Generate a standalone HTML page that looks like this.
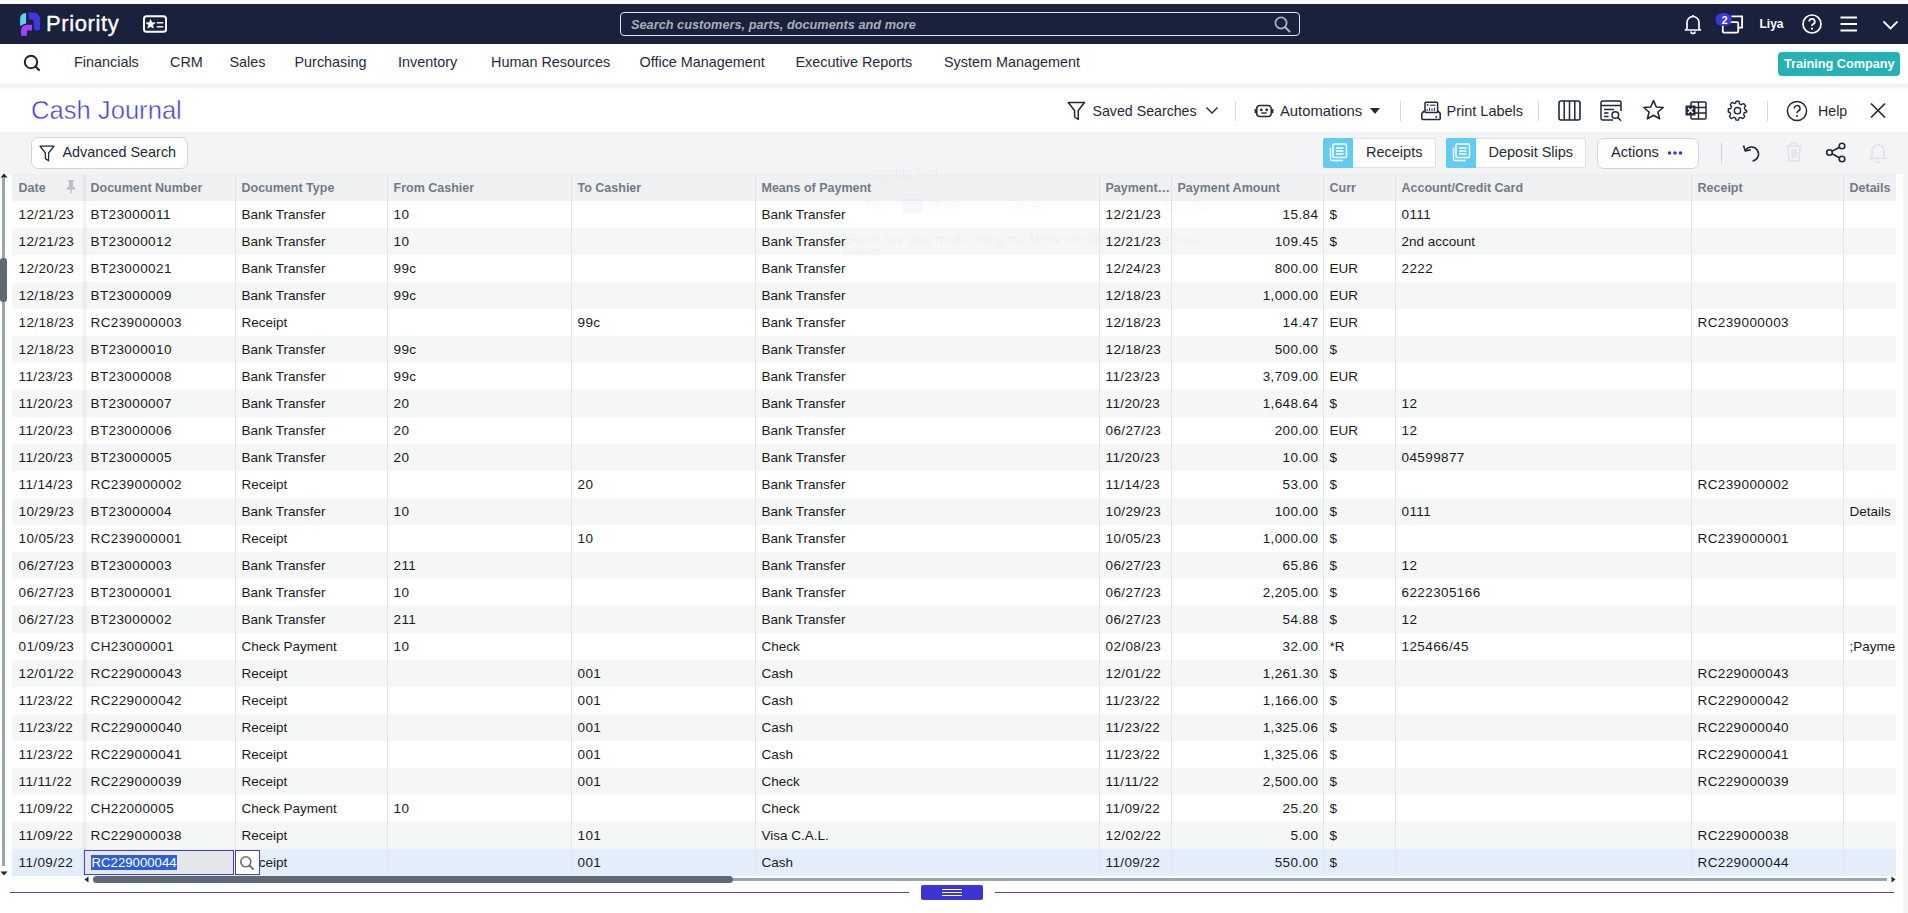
<!DOCTYPE html>
<html><head><meta charset="utf-8"><title>Cash Journal</title>
<style>
html,body{margin:0;padding:0}
body{width:1908px;height:913px;overflow:hidden;position:relative;background:#ffffff;font-family:"Liberation Sans", sans-serif}
.t{position:absolute;white-space:nowrap}
svg{overflow:visible}
</style></head><body>
<div style="position:absolute;left:0;top:0;width:1908px;height:4px;background:#fafafb"></div>
<div style="position:absolute;left:0;top:4px;width:1908px;height:40px;background:#19213d"></div>
<svg style="position:absolute;left:18px;top:11px" width="26" height="27" viewBox="0 0 26 27">
<path d="M8.1,2 V12.3 L2.1,15 V7.6 Q2.3,2.4 8.1,2 Z" fill="#5ccff4"/>
<path d="M10.7,1.6 H15.5 A6.6,6.6 0 0 1 22.1,8.2 V18.3 Q22.1,19.6 19.5,19.6 Q15.6,19.6 15.6,16 V10.6 Q15.6,8.6 13.6,8.6 H10.7 Z" fill="#3e36e2"/>
<path d="M14,13.8 V19.4 H9 V24.7 H3 V19.3 A5.5,5.5 0 0 1 8.5,13.8 Z" fill="#a33ff4"/>
</svg>
<div class="t" style="left:46px;top:9.83px;font-size:22px;line-height:27.5px;color:#ffffff;font-weight:normal;font-style:normal;letter-spacing:0.6px;-webkit-text-stroke:0.35px #ffffff">Priority</div>
<svg style="position:absolute;left:143px;top:15px" width="24" height="18" viewBox="0 0 24 18">
<rect x="1" y="1.2" width="22" height="15.6" rx="2.5" fill="none" stroke="#fff" stroke-width="2"/>
<path d="M7.60,4.50 L8.83,7.60 L12.17,7.82 L9.60,9.95 L10.42,13.18 L7.60,11.40 L4.78,13.18 L5.60,9.95 L3.03,7.82 L6.37,7.60 Z" fill="#fff" stroke="#fff" stroke-width="0.6" stroke-linejoin="round"/>
<rect x="13.7" y="7.1" width="6.6" height="1.4" fill="#fff"/>
<rect x="13.7" y="11.1" width="6.6" height="1.4" fill="#fff"/>
</svg>
<div style="position:absolute;left:620px;top:12px;width:678px;height:22px;border:1px solid #dfe3ea;border-radius:4px"></div>
<div class="t" style="left:631px;top:17.01px;font-size:12.75px;line-height:15.94px;color:#a9aeb8;font-weight:bold;font-style:italic;">Search customers, parts, documents and more</div>
<svg style="position:absolute;left:1274px;top:16px" width="17" height="17" viewBox="0 0 17 17">
<circle cx="7" cy="7" r="5.6" fill="none" stroke="#aeb4bf" stroke-width="1.8"/>
<path d="M11.2,11.2 L15.5,15.5" stroke="#aeb4bf" stroke-width="2" stroke-linecap="round"/></svg>
<svg style="position:absolute;left:1683px;top:14px" width="20" height="20" viewBox="0 0 20 20">
<path d="M4,14.5 V8.5 A6,6 0 0 1 16,8.5 V14.5 L17.5,16 H2.5 Z" fill="none" stroke="#fff" stroke-width="1.7" stroke-linejoin="round"/>
<path d="M8,17.5 A2,2 0 0 0 12,17.5" fill="none" stroke="#fff" stroke-width="1.7"/>
<path d="M10,2.5 V1" stroke="#fff" stroke-width="1.7"/></svg>
<svg style="position:absolute;left:1714px;top:11px" width="32" height="24" viewBox="0 0 32 24">
<rect x="8.8" y="11.2" width="15.4" height="10.4" rx="1.2" fill="none" stroke="#fff" stroke-width="1.8"/>
<path d="M17.5,5.3 H28.1 V16.6 H25" fill="none" stroke="#fff" stroke-width="1.8"/>
<ellipse cx="9.6" cy="8.5" rx="8.2" ry="6.6" fill="#3f38d9"/>
<text x="10.6" y="12.6" font-family="Liberation Sans" font-size="10.5" font-weight="bold" fill="#fff" text-anchor="middle">2</text>
</svg>
<div class="t" style="left:1759.5px;top:16.84px;font-size:12px;line-height:15.0px;color:#ffffff;font-weight:bold;font-style:normal;">Liya</div>
<svg style="position:absolute;left:1801px;top:14px" width="22" height="20" viewBox="0 0 22 20">
<circle cx="11" cy="10" r="9" fill="none" stroke="#fff" stroke-width="1.7"/>
<path d="M8.2,7.6 A2.8,2.8 0 1 1 11.8,10.3 C11.1,10.6 11,11 11,12" fill="none" stroke="#fff" stroke-width="1.7"/>
<circle cx="11" cy="14.7" r="1.1" fill="#fff"/></svg>
<svg style="position:absolute;left:1840px;top:16px" width="18" height="16" viewBox="0 0 18 16">
<path d="M0.5,1.5 H17 M0.5,8 H17 M0.5,14.5 H17" stroke="#fff" stroke-width="1.9"/></svg>
<svg style="position:absolute;left:1882px;top:19px" width="17" height="12" viewBox="0 0 17 12">
<path d="M1.5,2.5 L8.5,9.5 L15.5,2.5" fill="none" stroke="#fff" stroke-width="1.8"/></svg>
<div style="position:absolute;left:0;top:84px;width:1908px;height:5px;background:linear-gradient(#eceef1,#fbfbfc)"></div>
<svg style="position:absolute;left:23px;top:54px" width="19" height="19" viewBox="0 0 19 19">
<circle cx="8" cy="8" r="6.2" fill="none" stroke="#1b2436" stroke-width="2"/>
<path d="M12.5,12.5 L16,16" stroke="#1b2436" stroke-width="2.2" stroke-linecap="round"/></svg>
<div class="t" style="left:74px;top:53.21px;font-size:14.4px;line-height:18.0px;color:#1f2b3d;font-weight:normal;font-style:normal;">Financials</div>
<div class="t" style="left:170px;top:53.21px;font-size:14.4px;line-height:18.0px;color:#1f2b3d;font-weight:normal;font-style:normal;">CRM</div>
<div class="t" style="left:229.5px;top:53.21px;font-size:14.4px;line-height:18.0px;color:#1f2b3d;font-weight:normal;font-style:normal;">Sales</div>
<div class="t" style="left:294.5px;top:53.21px;font-size:14.4px;line-height:18.0px;color:#1f2b3d;font-weight:normal;font-style:normal;">Purchasing</div>
<div class="t" style="left:398px;top:53.21px;font-size:14.4px;line-height:18.0px;color:#1f2b3d;font-weight:normal;font-style:normal;">Inventory</div>
<div class="t" style="left:491px;top:53.21px;font-size:14.4px;line-height:18.0px;color:#1f2b3d;font-weight:normal;font-style:normal;">Human Resources</div>
<div class="t" style="left:639.5px;top:53.21px;font-size:14.4px;line-height:18.0px;color:#1f2b3d;font-weight:normal;font-style:normal;">Office Management</div>
<div class="t" style="left:795.5px;top:53.21px;font-size:14.4px;line-height:18.0px;color:#1f2b3d;font-weight:normal;font-style:normal;">Executive Reports</div>
<div class="t" style="left:944px;top:53.21px;font-size:14.4px;line-height:18.0px;color:#1f2b3d;font-weight:normal;font-style:normal;">System Management</div>
<div style="position:absolute;left:1778px;top:52px;width:122px;height:23.5px;border-radius:4px;background:#26b1b4"></div>
<div class="t" style="left:1784px;top:56.86px;font-size:12.7px;line-height:15.88px;color:#ffffff;font-weight:bold;font-style:normal;">Training Company</div>
<div class="t" style="left:31px;top:93.73px;font-size:25.6px;line-height:32.0px;color:#4b40c9;font-weight:normal;font-style:normal;-webkit-text-stroke:0.45px #ffffff">Cash Journal</div>
<svg style="position:absolute;left:1067px;top:101px" width="19" height="20" viewBox="0 0 19 20">
<path d="M1.2,1.5 H17.6 L11.2,9.5 V18.5 L7.6,16 V9.5 Z" fill="none" stroke="#1f2937" stroke-width="1.5" stroke-linejoin="round"/></svg>
<div class="t" style="left:1092.5px;top:102.5px;font-size:14.2px;line-height:17.75px;color:#1f2937;font-weight:normal;font-style:normal;">Saved Searches</div>
<svg style="position:absolute;left:1205px;top:105px" width="14" height="11" viewBox="0 0 14 11">
<path d="M1.5,2.5 L7,8 L12.5,2.5" fill="none" stroke="#1f2937" stroke-width="1.4"/></svg>
<div style="position:absolute;left:1235px;top:101px;width:1px;height:20px;background:#d6d9de"></div>
<svg style="position:absolute;left:1254px;top:103px" width="20" height="16" viewBox="0 0 20 16">
<rect x="2.8" y="2.6" width="14.4" height="11" rx="3" fill="none" stroke="#1f2937" stroke-width="1.5"/>
<rect x="0.6" y="6" width="2.2" height="4.2" fill="#1f2937"/><rect x="17.2" y="6" width="2.2" height="4.2" fill="#1f2937"/>
<circle cx="7.3" cy="6.9" r="1.3" fill="#1f2937"/><circle cx="12.7" cy="6.9" r="1.3" fill="#1f2937"/>
<path d="M7.3,10 H12.7" stroke="#1f2937" stroke-width="1.4"/></svg>
<div class="t" style="left:1280px;top:101.92px;font-size:14.8px;line-height:18.5px;color:#1f2937;font-weight:normal;font-style:normal;">Automations</div>
<svg style="position:absolute;left:1369px;top:107px" width="12" height="8" viewBox="0 0 12 8">
<path d="M1,1 H11 L6,7 Z" fill="#1f2937"/></svg>
<div style="position:absolute;left:1400px;top:101px;width:1px;height:20px;background:#d6d9de"></div>
<svg style="position:absolute;left:1420px;top:100px" width="22" height="21" viewBox="0 0 22 21">
<rect x="5" y="2.2" width="12.6" height="10.4" rx="0.8" fill="none" stroke="#1f2937" stroke-width="1.5"/>
<circle cx="7.6" cy="4.9" r="0.9" fill="#1f2937"/>
<path d="M10,5.2 H15.5" stroke="#1f2937" stroke-width="1.1"/>
<path d="M7.2,11 V9 M9.6,11 V7.8 M12,11 V8.6 M14.4,11 V7.6" stroke="#3a4456" stroke-width="1.1"/>
<path d="M4.6,10.6 L1.8,13.4 V18.4 A1,1 0 0 0 2.8,19.4 H19.2 A1,1 0 0 0 20.2,18.4 V13.4 L17.4,10.6" fill="none" stroke="#1f2937" stroke-width="1.5" stroke-linejoin="round"/>
<circle cx="16.2" cy="17" r="0.9" fill="#1f2937"/></svg>
<div class="t" style="left:1446.5px;top:102.22px;font-size:14.5px;line-height:18.12px;color:#1f2937;font-weight:normal;font-style:normal;">Print Labels</div>
<div style="position:absolute;left:1538px;top:101px;width:1px;height:20px;background:#d6d9de"></div>
<svg style="position:absolute;left:1558px;top:100px" width="23" height="21" viewBox="0 0 23 21">
<rect x="1" y="1" width="21" height="19" rx="2" fill="none" stroke="#1f2937" stroke-width="1.6"/>
<path d="M6.2,1 V20 M11.5,1 V20 M16.8,1 V20" stroke="#1f2937" stroke-width="1.5"/></svg>
<svg style="position:absolute;left:1600px;top:100px" width="23" height="22" viewBox="0 0 23 22">
<path d="M13,20 H2.5 A1.5,1.5 0 0 1 1,18.5 V2.5 A1.5,1.5 0 0 1 2.5,1 H19.5 A1.5,1.5 0 0 1 21,2.5 V11" fill="none" stroke="#1f2937" stroke-width="1.5"/>
<path d="M1,5.5 H21 M4,9.5 H14 M4,13 H8.5 M4,16.5 H8.5" stroke="#1f2937" stroke-width="1.4"/>
<circle cx="15.3" cy="15" r="3.3" fill="none" stroke="#1f2937" stroke-width="1.5"/>
<path d="M17.7,17.4 L21,20.7" stroke="#1f2937" stroke-width="1.6"/></svg>
<svg style="position:absolute;left:1642px;top:99px" width="23" height="22" viewBox="0 0 23 22">
<path d="M11.5,1.6 L14.3,8 L21.2,8.5 L15.9,13 L17.6,19.8 L11.5,16.2 L5.4,19.8 L7.1,13 L1.8,8.5 L8.7,8 Z" fill="none" stroke="#1f2937" stroke-width="1.6" stroke-linejoin="round"/></svg>
<svg style="position:absolute;left:1685px;top:101px" width="22" height="19" viewBox="0 0 22 19">
<rect x="6" y="1" width="15" height="17" rx="1" fill="none" stroke="#1f2937" stroke-width="1.5"/>
<path d="M6,6.5 H21 M6,12 H21 M13.5,1 V18" stroke="#1f2937" stroke-width="1.4"/>
<rect x="0.5" y="4.5" width="10" height="10" fill="#1f2937"/>
<path d="M3,7 L8,12 M8,7 L3,12" stroke="#fff" stroke-width="1.5"/></svg>
<svg style="position:absolute;left:1727px;top:100px" width="21" height="21" viewBox="0 0 24 24">
<path d="M10.3,1.5 H13.7 L14.3,4.4 L16.4,5.4 L19,4 L21.3,6.5 L19.8,9 L20.6,11.2 L22.5,12 V13.7 L19.8,14.4 L19,16.5 L20.3,19 L18,21.3 L15.5,19.9 L13.5,20.7 L13,23 H10.3 L9.7,20.6 L7.6,19.7 L5,21.2 L2.7,18.9 L4.2,16.4 L3.4,14.3 L1.5,13.7 V10.3 L4.3,9.7 L5.1,7.6 L3.7,5 L6,2.7 L8.5,4.1 L9.8,3.4 Z" fill="none" stroke="#1f2937" stroke-width="1.6" stroke-linejoin="round"/>
<circle cx="12" cy="12.2" r="3.6" fill="none" stroke="#1f2937" stroke-width="1.6"/></svg>
<div style="position:absolute;left:1767px;top:101px;width:1px;height:20px;background:#d6d9de"></div>
<svg style="position:absolute;left:1786px;top:100px" width="22" height="22" viewBox="0 0 22 22">
<circle cx="11" cy="11" r="9.6" fill="none" stroke="#1f2937" stroke-width="1.5"/>
<path d="M8.2,8.5 A2.9,2.9 0 1 1 11.9,11.3 C11.2,11.6 11,12 11,13.2" fill="none" stroke="#1f2937" stroke-width="1.5"/>
<circle cx="11" cy="15.9" r="1" fill="#1f2937"/></svg>
<div class="t" style="left:1818px;top:102.5px;font-size:14.2px;line-height:17.75px;color:#1f2937;font-weight:normal;font-style:normal;">Help</div>
<svg style="position:absolute;left:1869px;top:102px" width="18" height="17" viewBox="0 0 18 17">
<path d="M2,1.5 L16,15.5 M16,1.5 L2,15.5" stroke="#1f2937" stroke-width="1.7"/></svg>
<div style="position:absolute;left:0;top:132px;width:1908px;height:42px;background:#f2f4f6"></div>
<div style="position:absolute;left:30.5px;top:137px;width:155px;height:30px;border:1px solid #cfd5dd;border-radius:7px;background:#fff"></div>
<svg style="position:absolute;left:39px;top:145px" width="16" height="17" viewBox="0 0 16 17">
<path d="M1,1.2 H15 L9.6,8 V15.8 L6.4,13.6 V8 Z" fill="none" stroke="#1f2937" stroke-width="1.3" stroke-linejoin="round"/></svg>
<div class="t" style="left:62.5px;top:143.21px;font-size:14.4px;line-height:18.0px;color:#1f2937;font-weight:normal;font-style:normal;">Advanced Search</div>
<div style="position:absolute;left:1323px;top:138px;width:113px;height:30px;background:#fff;border:1px solid #dde2e8;box-sizing:border-box;border-radius:2px"></div><div style="position:absolute;left:1323px;top:138px;width:30px;height:30px;background:#62cbf1;border-radius:2px 0 0 2px"></div><svg style="position:absolute;left:1329px;top:143px" width="19" height="19" viewBox="0 0 19 19">
<rect x="4" y="1" width="13.5" height="13.5" rx="1.2" fill="none" stroke="#fff" stroke-width="1.5"/>
<path d="M1.5,4.5 V16 A1.5,1.5 0 0 0 3,17.5 H14" fill="none" stroke="#fff" stroke-width="1.5"/>
<path d="M7,5 H14.5 M7,8 H14.5 M7,11 H14.5" stroke="#fff" stroke-width="1.3"/></svg><div class="t" style="left:1366px;top:143.12px;font-size:14.5px;line-height:18.12px;color:#1f2937;font-weight:normal;font-style:normal;">Receipts</div>
<div style="position:absolute;left:1446px;top:138px;width:140px;height:30px;background:#fff;border:1px solid #dde2e8;box-sizing:border-box;border-radius:2px"></div><div style="position:absolute;left:1446px;top:138px;width:30px;height:30px;background:#62cbf1;border-radius:2px 0 0 2px"></div><svg style="position:absolute;left:1452px;top:143px" width="19" height="19" viewBox="0 0 19 19">
<rect x="4" y="1" width="13.5" height="13.5" rx="1.2" fill="none" stroke="#fff" stroke-width="1.5"/>
<path d="M1.5,4.5 V16 A1.5,1.5 0 0 0 3,17.5 H14" fill="none" stroke="#fff" stroke-width="1.5"/>
<path d="M7,5 H14.5 M7,8 H14.5 M7,11 H14.5" stroke="#fff" stroke-width="1.3"/></svg><div class="t" style="left:1488.5px;top:143.12px;font-size:14.5px;line-height:18.12px;color:#1f2937;font-weight:normal;font-style:normal;">Deposit Slips</div>
<div style="position:absolute;left:1596.5px;top:137.5px;width:100px;height:29.5px;border:1px solid #cfd5dd;border-radius:7px;background:#fff"></div>
<div class="t" style="left:1611px;top:143.02px;font-size:14.6px;line-height:18.25px;color:#1f2937;font-weight:normal;font-style:normal;">Actions</div>
<svg style="position:absolute;left:1667px;top:150px" width="16" height="6" viewBox="0 0 16 6">
<circle cx="2.5" cy="3" r="1.8" fill="#3d35c8"/><circle cx="8" cy="3" r="1.8" fill="#3d35c8"/><circle cx="13.5" cy="3" r="1.8" fill="#3d35c8"/></svg>
<div style="position:absolute;left:1721px;top:142.5px;width:1px;height:21px;background:#cfd5dc"></div>
<svg style="position:absolute;left:1742px;top:143px" width="19" height="20" viewBox="0 0 19 20">
<path d="M3.5,7.5 A7,7 0 1 1 10.5,18" fill="none" stroke="#1f2937" stroke-width="1.6"/>
<path d="M1.5,2.5 L3.3,8 L8.8,6.7" fill="none" stroke="#1f2937" stroke-width="1.6" stroke-linejoin="round"/></svg>
<svg style="position:absolute;left:1785px;top:142px" width="18" height="20" viewBox="0 0 18 20">
<path d="M1,4 H17 M6,4 V1.5 H12 V4 M3,4 L4,19 H14 L15,4 M7,7 V16 M9,7 V16 M11,7 V16" fill="none" stroke="#dfe2e6" stroke-width="1.5"/></svg>
<svg style="position:absolute;left:1825px;top:142px" width="22" height="21" viewBox="0 0 22 21">
<circle cx="17" cy="4" r="2.8" fill="none" stroke="#1f2937" stroke-width="1.6"/>
<circle cx="4.5" cy="10.5" r="2.8" fill="none" stroke="#1f2937" stroke-width="1.6"/>
<circle cx="17" cy="17" r="2.8" fill="none" stroke="#1f2937" stroke-width="1.6"/>
<path d="M7,9.2 L14.5,5.3 M7,11.8 L14.5,15.7" stroke="#1f2937" stroke-width="1.6"/></svg>
<svg style="position:absolute;left:1868px;top:142px" width="20" height="21" viewBox="0 0 20 21">
<path d="M4,15 V9 A6,6 0 0 1 16,9 V15 L17.5,16.5 H2.5 Z" fill="none" stroke="#e0e3e7" stroke-width="1.6"/>
<path d="M8,18.5 A2,2 0 0 0 12,18.5" fill="none" stroke="#e0e3e7" stroke-width="1.6"/></svg>
<div style="position:absolute;left:12px;top:174px;width:1884px;height:27px;background:#eff0f2"></div>
<div class="t" style="left:18.5px;top:181.46px;font-size:12.5px;line-height:15.62px;color:#727b85;font-weight:bold;font-style:normal;">Date</div>
<div class="t" style="left:90.5px;top:181.46px;font-size:12.5px;line-height:15.62px;color:#727b85;font-weight:bold;font-style:normal;">Document Number</div>
<div class="t" style="left:241.5px;top:181.46px;font-size:12.5px;line-height:15.62px;color:#727b85;font-weight:bold;font-style:normal;">Document Type</div>
<div class="t" style="left:393.5px;top:181.46px;font-size:12.5px;line-height:15.62px;color:#727b85;font-weight:bold;font-style:normal;">From Cashier</div>
<div class="t" style="left:577.5px;top:181.46px;font-size:12.5px;line-height:15.62px;color:#727b85;font-weight:bold;font-style:normal;">To Cashier</div>
<div class="t" style="left:761.5px;top:181.46px;font-size:12.5px;line-height:15.62px;color:#727b85;font-weight:bold;font-style:normal;">Means of Payment</div>
<div class="t" style="left:1105.5px;top:181.46px;font-size:12.5px;line-height:15.62px;color:#727b85;font-weight:bold;font-style:normal;">Payment…</div>
<div class="t" style="left:1177.5px;top:181.46px;font-size:12.5px;line-height:15.62px;color:#727b85;font-weight:bold;font-style:normal;">Payment Amount</div>
<div class="t" style="left:1329.5px;top:181.46px;font-size:12.5px;line-height:15.62px;color:#727b85;font-weight:bold;font-style:normal;">Curr</div>
<div class="t" style="left:1401.5px;top:181.46px;font-size:12.5px;line-height:15.62px;color:#727b85;font-weight:bold;font-style:normal;">Account/Credit Card</div>
<div class="t" style="left:1697.5px;top:181.46px;font-size:12.5px;line-height:15.62px;color:#727b85;font-weight:bold;font-style:normal;">Receipt</div>
<div class="t" style="left:1849.5px;top:181.46px;font-size:12.5px;line-height:15.62px;color:#727b85;font-weight:bold;font-style:normal;">Details</div>
<svg style="position:absolute;left:65px;top:178.5px" width="12" height="15" viewBox="0 0 12 15">
<path d="M3,1 H9 V2.5 L8,3 V7 L10.5,9.5 V10.5 H6.7 V14.5 H5.3 V10.5 H1.5 V9.5 L4,7 V3 L3,2.5 Z" fill="#b9bec5"/></svg>
<div style="position:absolute;left:12px;top:201px;width:1884px;height:27px;background:#ffffff"></div>
<div class="t" style="left:18.5px;top:206.88px;font-size:13.5px;line-height:16.88px;color:#1a1a1a;font-weight:normal;font-style:normal;letter-spacing:0.4px">12/21/23</div>
<div class="t" style="left:90.5px;top:206.88px;font-size:13.5px;line-height:16.88px;color:#1a1a1a;font-weight:normal;font-style:normal;letter-spacing:0.4px">BT23000011</div>
<div class="t" style="left:241.5px;top:206.88px;font-size:13.5px;line-height:16.88px;color:#1a1a1a;font-weight:normal;font-style:normal;">Bank Transfer</div>
<div class="t" style="left:393.5px;top:206.88px;font-size:13.5px;line-height:16.88px;color:#1a1a1a;font-weight:normal;font-style:normal;letter-spacing:0.4px">10</div>
<div class="t" style="left:761.5px;top:206.88px;font-size:13.5px;line-height:16.88px;color:#1a1a1a;font-weight:normal;font-style:normal;">Bank Transfer</div>
<div class="t" style="left:1105.5px;top:206.88px;font-size:13.5px;line-height:16.88px;color:#1a1a1a;font-weight:normal;font-style:normal;letter-spacing:0.4px">12/21/23</div>
<div class="t" style="right:589.5999999999999px;top:206.88px;font-size:13.5px;line-height:16.88px;color:#1a1a1a;font-weight:normal;font-style:normal;letter-spacing:0.4px">15.84</div>
<div class="t" style="left:1329.5px;top:206.88px;font-size:13.5px;line-height:16.88px;color:#1a1a1a;font-weight:normal;font-style:normal;">$</div>
<div class="t" style="left:1401.5px;top:206.88px;font-size:13.5px;line-height:16.88px;color:#1a1a1a;font-weight:normal;font-style:normal;letter-spacing:0.4px">0111</div>
<div style="position:absolute;left:12px;top:228px;width:1884px;height:27px;background:#f5f6f6"></div>
<div class="t" style="left:18.5px;top:233.88px;font-size:13.5px;line-height:16.88px;color:#1a1a1a;font-weight:normal;font-style:normal;letter-spacing:0.4px">12/21/23</div>
<div class="t" style="left:90.5px;top:233.88px;font-size:13.5px;line-height:16.88px;color:#1a1a1a;font-weight:normal;font-style:normal;letter-spacing:0.4px">BT23000012</div>
<div class="t" style="left:241.5px;top:233.88px;font-size:13.5px;line-height:16.88px;color:#1a1a1a;font-weight:normal;font-style:normal;">Bank Transfer</div>
<div class="t" style="left:393.5px;top:233.88px;font-size:13.5px;line-height:16.88px;color:#1a1a1a;font-weight:normal;font-style:normal;letter-spacing:0.4px">10</div>
<div class="t" style="left:761.5px;top:233.88px;font-size:13.5px;line-height:16.88px;color:#1a1a1a;font-weight:normal;font-style:normal;">Bank Transfer</div>
<div class="t" style="left:1105.5px;top:233.88px;font-size:13.5px;line-height:16.88px;color:#1a1a1a;font-weight:normal;font-style:normal;letter-spacing:0.4px">12/21/23</div>
<div class="t" style="right:589.5999999999999px;top:233.88px;font-size:13.5px;line-height:16.88px;color:#1a1a1a;font-weight:normal;font-style:normal;letter-spacing:0.4px">109.45</div>
<div class="t" style="left:1329.5px;top:233.88px;font-size:13.5px;line-height:16.88px;color:#1a1a1a;font-weight:normal;font-style:normal;">$</div>
<div class="t" style="left:1401.5px;top:233.88px;font-size:13.5px;line-height:16.88px;color:#1a1a1a;font-weight:normal;font-style:normal;">2nd account</div>
<div style="position:absolute;left:12px;top:255px;width:1884px;height:27px;background:#ffffff"></div>
<div class="t" style="left:18.5px;top:260.88px;font-size:13.5px;line-height:16.88px;color:#1a1a1a;font-weight:normal;font-style:normal;letter-spacing:0.4px">12/20/23</div>
<div class="t" style="left:90.5px;top:260.88px;font-size:13.5px;line-height:16.88px;color:#1a1a1a;font-weight:normal;font-style:normal;letter-spacing:0.4px">BT23000021</div>
<div class="t" style="left:241.5px;top:260.88px;font-size:13.5px;line-height:16.88px;color:#1a1a1a;font-weight:normal;font-style:normal;">Bank Transfer</div>
<div class="t" style="left:393.5px;top:260.88px;font-size:13.5px;line-height:16.88px;color:#1a1a1a;font-weight:normal;font-style:normal;letter-spacing:0.4px">99c</div>
<div class="t" style="left:761.5px;top:260.88px;font-size:13.5px;line-height:16.88px;color:#1a1a1a;font-weight:normal;font-style:normal;">Bank Transfer</div>
<div class="t" style="left:1105.5px;top:260.88px;font-size:13.5px;line-height:16.88px;color:#1a1a1a;font-weight:normal;font-style:normal;letter-spacing:0.4px">12/24/23</div>
<div class="t" style="right:589.5999999999999px;top:260.88px;font-size:13.5px;line-height:16.88px;color:#1a1a1a;font-weight:normal;font-style:normal;letter-spacing:0.4px">800.00</div>
<div class="t" style="left:1329.5px;top:260.88px;font-size:13.5px;line-height:16.88px;color:#1a1a1a;font-weight:normal;font-style:normal;">EUR</div>
<div class="t" style="left:1401.5px;top:260.88px;font-size:13.5px;line-height:16.88px;color:#1a1a1a;font-weight:normal;font-style:normal;letter-spacing:0.4px">2222</div>
<div style="position:absolute;left:12px;top:282px;width:1884px;height:27px;background:#f5f6f6"></div>
<div class="t" style="left:18.5px;top:287.88px;font-size:13.5px;line-height:16.88px;color:#1a1a1a;font-weight:normal;font-style:normal;letter-spacing:0.4px">12/18/23</div>
<div class="t" style="left:90.5px;top:287.88px;font-size:13.5px;line-height:16.88px;color:#1a1a1a;font-weight:normal;font-style:normal;letter-spacing:0.4px">BT23000009</div>
<div class="t" style="left:241.5px;top:287.88px;font-size:13.5px;line-height:16.88px;color:#1a1a1a;font-weight:normal;font-style:normal;">Bank Transfer</div>
<div class="t" style="left:393.5px;top:287.88px;font-size:13.5px;line-height:16.88px;color:#1a1a1a;font-weight:normal;font-style:normal;letter-spacing:0.4px">99c</div>
<div class="t" style="left:761.5px;top:287.88px;font-size:13.5px;line-height:16.88px;color:#1a1a1a;font-weight:normal;font-style:normal;">Bank Transfer</div>
<div class="t" style="left:1105.5px;top:287.88px;font-size:13.5px;line-height:16.88px;color:#1a1a1a;font-weight:normal;font-style:normal;letter-spacing:0.4px">12/18/23</div>
<div class="t" style="right:589.5999999999999px;top:287.88px;font-size:13.5px;line-height:16.88px;color:#1a1a1a;font-weight:normal;font-style:normal;letter-spacing:0.4px">1,000.00</div>
<div class="t" style="left:1329.5px;top:287.88px;font-size:13.5px;line-height:16.88px;color:#1a1a1a;font-weight:normal;font-style:normal;">EUR</div>
<div style="position:absolute;left:12px;top:309px;width:1884px;height:27px;background:#ffffff"></div>
<div class="t" style="left:18.5px;top:314.88px;font-size:13.5px;line-height:16.88px;color:#1a1a1a;font-weight:normal;font-style:normal;letter-spacing:0.4px">12/18/23</div>
<div class="t" style="left:90.5px;top:314.88px;font-size:13.5px;line-height:16.88px;color:#1a1a1a;font-weight:normal;font-style:normal;letter-spacing:0.4px">RC239000003</div>
<div class="t" style="left:241.5px;top:314.88px;font-size:13.5px;line-height:16.88px;color:#1a1a1a;font-weight:normal;font-style:normal;">Receipt</div>
<div class="t" style="left:577.5px;top:314.88px;font-size:13.5px;line-height:16.88px;color:#1a1a1a;font-weight:normal;font-style:normal;letter-spacing:0.4px">99c</div>
<div class="t" style="left:761.5px;top:314.88px;font-size:13.5px;line-height:16.88px;color:#1a1a1a;font-weight:normal;font-style:normal;">Bank Transfer</div>
<div class="t" style="left:1105.5px;top:314.88px;font-size:13.5px;line-height:16.88px;color:#1a1a1a;font-weight:normal;font-style:normal;letter-spacing:0.4px">12/18/23</div>
<div class="t" style="right:589.5999999999999px;top:314.88px;font-size:13.5px;line-height:16.88px;color:#1a1a1a;font-weight:normal;font-style:normal;letter-spacing:0.4px">14.47</div>
<div class="t" style="left:1329.5px;top:314.88px;font-size:13.5px;line-height:16.88px;color:#1a1a1a;font-weight:normal;font-style:normal;">EUR</div>
<div class="t" style="left:1697.5px;top:314.88px;font-size:13.5px;line-height:16.88px;color:#1a1a1a;font-weight:normal;font-style:normal;letter-spacing:0.4px">RC239000003</div>
<div style="position:absolute;left:12px;top:336px;width:1884px;height:27px;background:#f5f6f6"></div>
<div class="t" style="left:18.5px;top:341.88px;font-size:13.5px;line-height:16.88px;color:#1a1a1a;font-weight:normal;font-style:normal;letter-spacing:0.4px">12/18/23</div>
<div class="t" style="left:90.5px;top:341.88px;font-size:13.5px;line-height:16.88px;color:#1a1a1a;font-weight:normal;font-style:normal;letter-spacing:0.4px">BT23000010</div>
<div class="t" style="left:241.5px;top:341.88px;font-size:13.5px;line-height:16.88px;color:#1a1a1a;font-weight:normal;font-style:normal;">Bank Transfer</div>
<div class="t" style="left:393.5px;top:341.88px;font-size:13.5px;line-height:16.88px;color:#1a1a1a;font-weight:normal;font-style:normal;letter-spacing:0.4px">99c</div>
<div class="t" style="left:761.5px;top:341.88px;font-size:13.5px;line-height:16.88px;color:#1a1a1a;font-weight:normal;font-style:normal;">Bank Transfer</div>
<div class="t" style="left:1105.5px;top:341.88px;font-size:13.5px;line-height:16.88px;color:#1a1a1a;font-weight:normal;font-style:normal;letter-spacing:0.4px">12/18/23</div>
<div class="t" style="right:589.5999999999999px;top:341.88px;font-size:13.5px;line-height:16.88px;color:#1a1a1a;font-weight:normal;font-style:normal;letter-spacing:0.4px">500.00</div>
<div class="t" style="left:1329.5px;top:341.88px;font-size:13.5px;line-height:16.88px;color:#1a1a1a;font-weight:normal;font-style:normal;">$</div>
<div style="position:absolute;left:12px;top:363px;width:1884px;height:27px;background:#ffffff"></div>
<div class="t" style="left:18.5px;top:368.88px;font-size:13.5px;line-height:16.88px;color:#1a1a1a;font-weight:normal;font-style:normal;letter-spacing:0.4px">11/23/23</div>
<div class="t" style="left:90.5px;top:368.88px;font-size:13.5px;line-height:16.88px;color:#1a1a1a;font-weight:normal;font-style:normal;letter-spacing:0.4px">BT23000008</div>
<div class="t" style="left:241.5px;top:368.88px;font-size:13.5px;line-height:16.88px;color:#1a1a1a;font-weight:normal;font-style:normal;">Bank Transfer</div>
<div class="t" style="left:393.5px;top:368.88px;font-size:13.5px;line-height:16.88px;color:#1a1a1a;font-weight:normal;font-style:normal;letter-spacing:0.4px">99c</div>
<div class="t" style="left:761.5px;top:368.88px;font-size:13.5px;line-height:16.88px;color:#1a1a1a;font-weight:normal;font-style:normal;">Bank Transfer</div>
<div class="t" style="left:1105.5px;top:368.88px;font-size:13.5px;line-height:16.88px;color:#1a1a1a;font-weight:normal;font-style:normal;letter-spacing:0.4px">11/23/23</div>
<div class="t" style="right:589.5999999999999px;top:368.88px;font-size:13.5px;line-height:16.88px;color:#1a1a1a;font-weight:normal;font-style:normal;letter-spacing:0.4px">3,709.00</div>
<div class="t" style="left:1329.5px;top:368.88px;font-size:13.5px;line-height:16.88px;color:#1a1a1a;font-weight:normal;font-style:normal;">EUR</div>
<div style="position:absolute;left:12px;top:390px;width:1884px;height:27px;background:#f5f6f6"></div>
<div class="t" style="left:18.5px;top:395.88px;font-size:13.5px;line-height:16.88px;color:#1a1a1a;font-weight:normal;font-style:normal;letter-spacing:0.4px">11/20/23</div>
<div class="t" style="left:90.5px;top:395.88px;font-size:13.5px;line-height:16.88px;color:#1a1a1a;font-weight:normal;font-style:normal;letter-spacing:0.4px">BT23000007</div>
<div class="t" style="left:241.5px;top:395.88px;font-size:13.5px;line-height:16.88px;color:#1a1a1a;font-weight:normal;font-style:normal;">Bank Transfer</div>
<div class="t" style="left:393.5px;top:395.88px;font-size:13.5px;line-height:16.88px;color:#1a1a1a;font-weight:normal;font-style:normal;letter-spacing:0.4px">20</div>
<div class="t" style="left:761.5px;top:395.88px;font-size:13.5px;line-height:16.88px;color:#1a1a1a;font-weight:normal;font-style:normal;">Bank Transfer</div>
<div class="t" style="left:1105.5px;top:395.88px;font-size:13.5px;line-height:16.88px;color:#1a1a1a;font-weight:normal;font-style:normal;letter-spacing:0.4px">11/20/23</div>
<div class="t" style="right:589.5999999999999px;top:395.88px;font-size:13.5px;line-height:16.88px;color:#1a1a1a;font-weight:normal;font-style:normal;letter-spacing:0.4px">1,648.64</div>
<div class="t" style="left:1329.5px;top:395.88px;font-size:13.5px;line-height:16.88px;color:#1a1a1a;font-weight:normal;font-style:normal;">$</div>
<div class="t" style="left:1401.5px;top:395.88px;font-size:13.5px;line-height:16.88px;color:#1a1a1a;font-weight:normal;font-style:normal;letter-spacing:0.4px">12</div>
<div style="position:absolute;left:12px;top:417px;width:1884px;height:27px;background:#ffffff"></div>
<div class="t" style="left:18.5px;top:422.88px;font-size:13.5px;line-height:16.88px;color:#1a1a1a;font-weight:normal;font-style:normal;letter-spacing:0.4px">11/20/23</div>
<div class="t" style="left:90.5px;top:422.88px;font-size:13.5px;line-height:16.88px;color:#1a1a1a;font-weight:normal;font-style:normal;letter-spacing:0.4px">BT23000006</div>
<div class="t" style="left:241.5px;top:422.88px;font-size:13.5px;line-height:16.88px;color:#1a1a1a;font-weight:normal;font-style:normal;">Bank Transfer</div>
<div class="t" style="left:393.5px;top:422.88px;font-size:13.5px;line-height:16.88px;color:#1a1a1a;font-weight:normal;font-style:normal;letter-spacing:0.4px">20</div>
<div class="t" style="left:761.5px;top:422.88px;font-size:13.5px;line-height:16.88px;color:#1a1a1a;font-weight:normal;font-style:normal;">Bank Transfer</div>
<div class="t" style="left:1105.5px;top:422.88px;font-size:13.5px;line-height:16.88px;color:#1a1a1a;font-weight:normal;font-style:normal;letter-spacing:0.4px">06/27/23</div>
<div class="t" style="right:589.5999999999999px;top:422.88px;font-size:13.5px;line-height:16.88px;color:#1a1a1a;font-weight:normal;font-style:normal;letter-spacing:0.4px">200.00</div>
<div class="t" style="left:1329.5px;top:422.88px;font-size:13.5px;line-height:16.88px;color:#1a1a1a;font-weight:normal;font-style:normal;">EUR</div>
<div class="t" style="left:1401.5px;top:422.88px;font-size:13.5px;line-height:16.88px;color:#1a1a1a;font-weight:normal;font-style:normal;letter-spacing:0.4px">12</div>
<div style="position:absolute;left:12px;top:444px;width:1884px;height:27px;background:#f5f6f6"></div>
<div class="t" style="left:18.5px;top:449.88px;font-size:13.5px;line-height:16.88px;color:#1a1a1a;font-weight:normal;font-style:normal;letter-spacing:0.4px">11/20/23</div>
<div class="t" style="left:90.5px;top:449.88px;font-size:13.5px;line-height:16.88px;color:#1a1a1a;font-weight:normal;font-style:normal;letter-spacing:0.4px">BT23000005</div>
<div class="t" style="left:241.5px;top:449.88px;font-size:13.5px;line-height:16.88px;color:#1a1a1a;font-weight:normal;font-style:normal;">Bank Transfer</div>
<div class="t" style="left:393.5px;top:449.88px;font-size:13.5px;line-height:16.88px;color:#1a1a1a;font-weight:normal;font-style:normal;letter-spacing:0.4px">20</div>
<div class="t" style="left:761.5px;top:449.88px;font-size:13.5px;line-height:16.88px;color:#1a1a1a;font-weight:normal;font-style:normal;">Bank Transfer</div>
<div class="t" style="left:1105.5px;top:449.88px;font-size:13.5px;line-height:16.88px;color:#1a1a1a;font-weight:normal;font-style:normal;letter-spacing:0.4px">11/20/23</div>
<div class="t" style="right:589.5999999999999px;top:449.88px;font-size:13.5px;line-height:16.88px;color:#1a1a1a;font-weight:normal;font-style:normal;letter-spacing:0.4px">10.00</div>
<div class="t" style="left:1329.5px;top:449.88px;font-size:13.5px;line-height:16.88px;color:#1a1a1a;font-weight:normal;font-style:normal;">$</div>
<div class="t" style="left:1401.5px;top:449.88px;font-size:13.5px;line-height:16.88px;color:#1a1a1a;font-weight:normal;font-style:normal;letter-spacing:0.4px">04599877</div>
<div style="position:absolute;left:12px;top:471px;width:1884px;height:27px;background:#ffffff"></div>
<div class="t" style="left:18.5px;top:476.88px;font-size:13.5px;line-height:16.88px;color:#1a1a1a;font-weight:normal;font-style:normal;letter-spacing:0.4px">11/14/23</div>
<div class="t" style="left:90.5px;top:476.88px;font-size:13.5px;line-height:16.88px;color:#1a1a1a;font-weight:normal;font-style:normal;letter-spacing:0.4px">RC239000002</div>
<div class="t" style="left:241.5px;top:476.88px;font-size:13.5px;line-height:16.88px;color:#1a1a1a;font-weight:normal;font-style:normal;">Receipt</div>
<div class="t" style="left:577.5px;top:476.88px;font-size:13.5px;line-height:16.88px;color:#1a1a1a;font-weight:normal;font-style:normal;letter-spacing:0.4px">20</div>
<div class="t" style="left:761.5px;top:476.88px;font-size:13.5px;line-height:16.88px;color:#1a1a1a;font-weight:normal;font-style:normal;">Bank Transfer</div>
<div class="t" style="left:1105.5px;top:476.88px;font-size:13.5px;line-height:16.88px;color:#1a1a1a;font-weight:normal;font-style:normal;letter-spacing:0.4px">11/14/23</div>
<div class="t" style="right:589.5999999999999px;top:476.88px;font-size:13.5px;line-height:16.88px;color:#1a1a1a;font-weight:normal;font-style:normal;letter-spacing:0.4px">53.00</div>
<div class="t" style="left:1329.5px;top:476.88px;font-size:13.5px;line-height:16.88px;color:#1a1a1a;font-weight:normal;font-style:normal;">$</div>
<div class="t" style="left:1697.5px;top:476.88px;font-size:13.5px;line-height:16.88px;color:#1a1a1a;font-weight:normal;font-style:normal;letter-spacing:0.4px">RC239000002</div>
<div style="position:absolute;left:12px;top:498px;width:1884px;height:27px;background:#f5f6f6"></div>
<div class="t" style="left:18.5px;top:503.88px;font-size:13.5px;line-height:16.88px;color:#1a1a1a;font-weight:normal;font-style:normal;letter-spacing:0.4px">10/29/23</div>
<div class="t" style="left:90.5px;top:503.88px;font-size:13.5px;line-height:16.88px;color:#1a1a1a;font-weight:normal;font-style:normal;letter-spacing:0.4px">BT23000004</div>
<div class="t" style="left:241.5px;top:503.88px;font-size:13.5px;line-height:16.88px;color:#1a1a1a;font-weight:normal;font-style:normal;">Bank Transfer</div>
<div class="t" style="left:393.5px;top:503.88px;font-size:13.5px;line-height:16.88px;color:#1a1a1a;font-weight:normal;font-style:normal;letter-spacing:0.4px">10</div>
<div class="t" style="left:761.5px;top:503.88px;font-size:13.5px;line-height:16.88px;color:#1a1a1a;font-weight:normal;font-style:normal;">Bank Transfer</div>
<div class="t" style="left:1105.5px;top:503.88px;font-size:13.5px;line-height:16.88px;color:#1a1a1a;font-weight:normal;font-style:normal;letter-spacing:0.4px">10/29/23</div>
<div class="t" style="right:589.5999999999999px;top:503.88px;font-size:13.5px;line-height:16.88px;color:#1a1a1a;font-weight:normal;font-style:normal;letter-spacing:0.4px">100.00</div>
<div class="t" style="left:1329.5px;top:503.88px;font-size:13.5px;line-height:16.88px;color:#1a1a1a;font-weight:normal;font-style:normal;">$</div>
<div class="t" style="left:1401.5px;top:503.88px;font-size:13.5px;line-height:16.88px;color:#1a1a1a;font-weight:normal;font-style:normal;letter-spacing:0.4px">0111</div>
<div class="t" style="left:1849.5px;top:503.88px;font-size:13.5px;line-height:16.88px;color:#1a1a1a;font-weight:normal;font-style:normal;">Details</div>
<div style="position:absolute;left:12px;top:525px;width:1884px;height:27px;background:#ffffff"></div>
<div class="t" style="left:18.5px;top:530.88px;font-size:13.5px;line-height:16.88px;color:#1a1a1a;font-weight:normal;font-style:normal;letter-spacing:0.4px">10/05/23</div>
<div class="t" style="left:90.5px;top:530.88px;font-size:13.5px;line-height:16.88px;color:#1a1a1a;font-weight:normal;font-style:normal;letter-spacing:0.4px">RC239000001</div>
<div class="t" style="left:241.5px;top:530.88px;font-size:13.5px;line-height:16.88px;color:#1a1a1a;font-weight:normal;font-style:normal;">Receipt</div>
<div class="t" style="left:577.5px;top:530.88px;font-size:13.5px;line-height:16.88px;color:#1a1a1a;font-weight:normal;font-style:normal;letter-spacing:0.4px">10</div>
<div class="t" style="left:761.5px;top:530.88px;font-size:13.5px;line-height:16.88px;color:#1a1a1a;font-weight:normal;font-style:normal;">Bank Transfer</div>
<div class="t" style="left:1105.5px;top:530.88px;font-size:13.5px;line-height:16.88px;color:#1a1a1a;font-weight:normal;font-style:normal;letter-spacing:0.4px">10/05/23</div>
<div class="t" style="right:589.5999999999999px;top:530.88px;font-size:13.5px;line-height:16.88px;color:#1a1a1a;font-weight:normal;font-style:normal;letter-spacing:0.4px">1,000.00</div>
<div class="t" style="left:1329.5px;top:530.88px;font-size:13.5px;line-height:16.88px;color:#1a1a1a;font-weight:normal;font-style:normal;">$</div>
<div class="t" style="left:1697.5px;top:530.88px;font-size:13.5px;line-height:16.88px;color:#1a1a1a;font-weight:normal;font-style:normal;letter-spacing:0.4px">RC239000001</div>
<div style="position:absolute;left:12px;top:552px;width:1884px;height:27px;background:#f5f6f6"></div>
<div class="t" style="left:18.5px;top:557.88px;font-size:13.5px;line-height:16.88px;color:#1a1a1a;font-weight:normal;font-style:normal;letter-spacing:0.4px">06/27/23</div>
<div class="t" style="left:90.5px;top:557.88px;font-size:13.5px;line-height:16.88px;color:#1a1a1a;font-weight:normal;font-style:normal;letter-spacing:0.4px">BT23000003</div>
<div class="t" style="left:241.5px;top:557.88px;font-size:13.5px;line-height:16.88px;color:#1a1a1a;font-weight:normal;font-style:normal;">Bank Transfer</div>
<div class="t" style="left:393.5px;top:557.88px;font-size:13.5px;line-height:16.88px;color:#1a1a1a;font-weight:normal;font-style:normal;letter-spacing:0.4px">211</div>
<div class="t" style="left:761.5px;top:557.88px;font-size:13.5px;line-height:16.88px;color:#1a1a1a;font-weight:normal;font-style:normal;">Bank Transfer</div>
<div class="t" style="left:1105.5px;top:557.88px;font-size:13.5px;line-height:16.88px;color:#1a1a1a;font-weight:normal;font-style:normal;letter-spacing:0.4px">06/27/23</div>
<div class="t" style="right:589.5999999999999px;top:557.88px;font-size:13.5px;line-height:16.88px;color:#1a1a1a;font-weight:normal;font-style:normal;letter-spacing:0.4px">65.86</div>
<div class="t" style="left:1329.5px;top:557.88px;font-size:13.5px;line-height:16.88px;color:#1a1a1a;font-weight:normal;font-style:normal;">$</div>
<div class="t" style="left:1401.5px;top:557.88px;font-size:13.5px;line-height:16.88px;color:#1a1a1a;font-weight:normal;font-style:normal;letter-spacing:0.4px">12</div>
<div style="position:absolute;left:12px;top:579px;width:1884px;height:27px;background:#ffffff"></div>
<div class="t" style="left:18.5px;top:584.88px;font-size:13.5px;line-height:16.88px;color:#1a1a1a;font-weight:normal;font-style:normal;letter-spacing:0.4px">06/27/23</div>
<div class="t" style="left:90.5px;top:584.88px;font-size:13.5px;line-height:16.88px;color:#1a1a1a;font-weight:normal;font-style:normal;letter-spacing:0.4px">BT23000001</div>
<div class="t" style="left:241.5px;top:584.88px;font-size:13.5px;line-height:16.88px;color:#1a1a1a;font-weight:normal;font-style:normal;">Bank Transfer</div>
<div class="t" style="left:393.5px;top:584.88px;font-size:13.5px;line-height:16.88px;color:#1a1a1a;font-weight:normal;font-style:normal;letter-spacing:0.4px">10</div>
<div class="t" style="left:761.5px;top:584.88px;font-size:13.5px;line-height:16.88px;color:#1a1a1a;font-weight:normal;font-style:normal;">Bank Transfer</div>
<div class="t" style="left:1105.5px;top:584.88px;font-size:13.5px;line-height:16.88px;color:#1a1a1a;font-weight:normal;font-style:normal;letter-spacing:0.4px">06/27/23</div>
<div class="t" style="right:589.5999999999999px;top:584.88px;font-size:13.5px;line-height:16.88px;color:#1a1a1a;font-weight:normal;font-style:normal;letter-spacing:0.4px">2,205.00</div>
<div class="t" style="left:1329.5px;top:584.88px;font-size:13.5px;line-height:16.88px;color:#1a1a1a;font-weight:normal;font-style:normal;">$</div>
<div class="t" style="left:1401.5px;top:584.88px;font-size:13.5px;line-height:16.88px;color:#1a1a1a;font-weight:normal;font-style:normal;letter-spacing:0.4px">6222305166</div>
<div style="position:absolute;left:12px;top:606px;width:1884px;height:27px;background:#f5f6f6"></div>
<div class="t" style="left:18.5px;top:611.88px;font-size:13.5px;line-height:16.88px;color:#1a1a1a;font-weight:normal;font-style:normal;letter-spacing:0.4px">06/27/23</div>
<div class="t" style="left:90.5px;top:611.88px;font-size:13.5px;line-height:16.88px;color:#1a1a1a;font-weight:normal;font-style:normal;letter-spacing:0.4px">BT23000002</div>
<div class="t" style="left:241.5px;top:611.88px;font-size:13.5px;line-height:16.88px;color:#1a1a1a;font-weight:normal;font-style:normal;">Bank Transfer</div>
<div class="t" style="left:393.5px;top:611.88px;font-size:13.5px;line-height:16.88px;color:#1a1a1a;font-weight:normal;font-style:normal;letter-spacing:0.4px">211</div>
<div class="t" style="left:761.5px;top:611.88px;font-size:13.5px;line-height:16.88px;color:#1a1a1a;font-weight:normal;font-style:normal;">Bank Transfer</div>
<div class="t" style="left:1105.5px;top:611.88px;font-size:13.5px;line-height:16.88px;color:#1a1a1a;font-weight:normal;font-style:normal;letter-spacing:0.4px">06/27/23</div>
<div class="t" style="right:589.5999999999999px;top:611.88px;font-size:13.5px;line-height:16.88px;color:#1a1a1a;font-weight:normal;font-style:normal;letter-spacing:0.4px">54.88</div>
<div class="t" style="left:1329.5px;top:611.88px;font-size:13.5px;line-height:16.88px;color:#1a1a1a;font-weight:normal;font-style:normal;">$</div>
<div class="t" style="left:1401.5px;top:611.88px;font-size:13.5px;line-height:16.88px;color:#1a1a1a;font-weight:normal;font-style:normal;letter-spacing:0.4px">12</div>
<div style="position:absolute;left:12px;top:633px;width:1884px;height:27px;background:#ffffff"></div>
<div class="t" style="left:18.5px;top:638.88px;font-size:13.5px;line-height:16.88px;color:#1a1a1a;font-weight:normal;font-style:normal;letter-spacing:0.4px">01/09/23</div>
<div class="t" style="left:90.5px;top:638.88px;font-size:13.5px;line-height:16.88px;color:#1a1a1a;font-weight:normal;font-style:normal;letter-spacing:0.4px">CH23000001</div>
<div class="t" style="left:241.5px;top:638.88px;font-size:13.5px;line-height:16.88px;color:#1a1a1a;font-weight:normal;font-style:normal;">Check Payment</div>
<div class="t" style="left:393.5px;top:638.88px;font-size:13.5px;line-height:16.88px;color:#1a1a1a;font-weight:normal;font-style:normal;letter-spacing:0.4px">10</div>
<div class="t" style="left:761.5px;top:638.88px;font-size:13.5px;line-height:16.88px;color:#1a1a1a;font-weight:normal;font-style:normal;">Check</div>
<div class="t" style="left:1105.5px;top:638.88px;font-size:13.5px;line-height:16.88px;color:#1a1a1a;font-weight:normal;font-style:normal;letter-spacing:0.4px">02/08/23</div>
<div class="t" style="right:589.5999999999999px;top:638.88px;font-size:13.5px;line-height:16.88px;color:#1a1a1a;font-weight:normal;font-style:normal;letter-spacing:0.4px">32.00</div>
<div class="t" style="left:1329.5px;top:638.88px;font-size:13.5px;line-height:16.88px;color:#1a1a1a;font-weight:normal;font-style:normal;">*R</div>
<div class="t" style="left:1401.5px;top:638.88px;font-size:13.5px;line-height:16.88px;color:#1a1a1a;font-weight:normal;font-style:normal;letter-spacing:0.4px">125466/45</div>
<div class="t" style="left:1849.5px;top:638.88px;font-size:13.5px;line-height:16.88px;color:#1a1a1a;font-weight:normal;font-style:normal;">;Payme</div>
<div style="position:absolute;left:12px;top:660px;width:1884px;height:27px;background:#f5f6f6"></div>
<div class="t" style="left:18.5px;top:665.88px;font-size:13.5px;line-height:16.88px;color:#1a1a1a;font-weight:normal;font-style:normal;letter-spacing:0.4px">12/01/22</div>
<div class="t" style="left:90.5px;top:665.88px;font-size:13.5px;line-height:16.88px;color:#1a1a1a;font-weight:normal;font-style:normal;letter-spacing:0.4px">RC229000043</div>
<div class="t" style="left:241.5px;top:665.88px;font-size:13.5px;line-height:16.88px;color:#1a1a1a;font-weight:normal;font-style:normal;">Receipt</div>
<div class="t" style="left:577.5px;top:665.88px;font-size:13.5px;line-height:16.88px;color:#1a1a1a;font-weight:normal;font-style:normal;letter-spacing:0.4px">001</div>
<div class="t" style="left:761.5px;top:665.88px;font-size:13.5px;line-height:16.88px;color:#1a1a1a;font-weight:normal;font-style:normal;">Cash</div>
<div class="t" style="left:1105.5px;top:665.88px;font-size:13.5px;line-height:16.88px;color:#1a1a1a;font-weight:normal;font-style:normal;letter-spacing:0.4px">12/01/22</div>
<div class="t" style="right:589.5999999999999px;top:665.88px;font-size:13.5px;line-height:16.88px;color:#1a1a1a;font-weight:normal;font-style:normal;letter-spacing:0.4px">1,261.30</div>
<div class="t" style="left:1329.5px;top:665.88px;font-size:13.5px;line-height:16.88px;color:#1a1a1a;font-weight:normal;font-style:normal;">$</div>
<div class="t" style="left:1697.5px;top:665.88px;font-size:13.5px;line-height:16.88px;color:#1a1a1a;font-weight:normal;font-style:normal;letter-spacing:0.4px">RC229000043</div>
<div style="position:absolute;left:12px;top:687px;width:1884px;height:27px;background:#ffffff"></div>
<div class="t" style="left:18.5px;top:692.88px;font-size:13.5px;line-height:16.88px;color:#1a1a1a;font-weight:normal;font-style:normal;letter-spacing:0.4px">11/23/22</div>
<div class="t" style="left:90.5px;top:692.88px;font-size:13.5px;line-height:16.88px;color:#1a1a1a;font-weight:normal;font-style:normal;letter-spacing:0.4px">RC229000042</div>
<div class="t" style="left:241.5px;top:692.88px;font-size:13.5px;line-height:16.88px;color:#1a1a1a;font-weight:normal;font-style:normal;">Receipt</div>
<div class="t" style="left:577.5px;top:692.88px;font-size:13.5px;line-height:16.88px;color:#1a1a1a;font-weight:normal;font-style:normal;letter-spacing:0.4px">001</div>
<div class="t" style="left:761.5px;top:692.88px;font-size:13.5px;line-height:16.88px;color:#1a1a1a;font-weight:normal;font-style:normal;">Cash</div>
<div class="t" style="left:1105.5px;top:692.88px;font-size:13.5px;line-height:16.88px;color:#1a1a1a;font-weight:normal;font-style:normal;letter-spacing:0.4px">11/23/22</div>
<div class="t" style="right:589.5999999999999px;top:692.88px;font-size:13.5px;line-height:16.88px;color:#1a1a1a;font-weight:normal;font-style:normal;letter-spacing:0.4px">1,166.00</div>
<div class="t" style="left:1329.5px;top:692.88px;font-size:13.5px;line-height:16.88px;color:#1a1a1a;font-weight:normal;font-style:normal;">$</div>
<div class="t" style="left:1697.5px;top:692.88px;font-size:13.5px;line-height:16.88px;color:#1a1a1a;font-weight:normal;font-style:normal;letter-spacing:0.4px">RC229000042</div>
<div style="position:absolute;left:12px;top:714px;width:1884px;height:27px;background:#f5f6f6"></div>
<div class="t" style="left:18.5px;top:719.88px;font-size:13.5px;line-height:16.88px;color:#1a1a1a;font-weight:normal;font-style:normal;letter-spacing:0.4px">11/23/22</div>
<div class="t" style="left:90.5px;top:719.88px;font-size:13.5px;line-height:16.88px;color:#1a1a1a;font-weight:normal;font-style:normal;letter-spacing:0.4px">RC229000040</div>
<div class="t" style="left:241.5px;top:719.88px;font-size:13.5px;line-height:16.88px;color:#1a1a1a;font-weight:normal;font-style:normal;">Receipt</div>
<div class="t" style="left:577.5px;top:719.88px;font-size:13.5px;line-height:16.88px;color:#1a1a1a;font-weight:normal;font-style:normal;letter-spacing:0.4px">001</div>
<div class="t" style="left:761.5px;top:719.88px;font-size:13.5px;line-height:16.88px;color:#1a1a1a;font-weight:normal;font-style:normal;">Cash</div>
<div class="t" style="left:1105.5px;top:719.88px;font-size:13.5px;line-height:16.88px;color:#1a1a1a;font-weight:normal;font-style:normal;letter-spacing:0.4px">11/23/22</div>
<div class="t" style="right:589.5999999999999px;top:719.88px;font-size:13.5px;line-height:16.88px;color:#1a1a1a;font-weight:normal;font-style:normal;letter-spacing:0.4px">1,325.06</div>
<div class="t" style="left:1329.5px;top:719.88px;font-size:13.5px;line-height:16.88px;color:#1a1a1a;font-weight:normal;font-style:normal;">$</div>
<div class="t" style="left:1697.5px;top:719.88px;font-size:13.5px;line-height:16.88px;color:#1a1a1a;font-weight:normal;font-style:normal;letter-spacing:0.4px">RC229000040</div>
<div style="position:absolute;left:12px;top:741px;width:1884px;height:27px;background:#ffffff"></div>
<div class="t" style="left:18.5px;top:746.88px;font-size:13.5px;line-height:16.88px;color:#1a1a1a;font-weight:normal;font-style:normal;letter-spacing:0.4px">11/23/22</div>
<div class="t" style="left:90.5px;top:746.88px;font-size:13.5px;line-height:16.88px;color:#1a1a1a;font-weight:normal;font-style:normal;letter-spacing:0.4px">RC229000041</div>
<div class="t" style="left:241.5px;top:746.88px;font-size:13.5px;line-height:16.88px;color:#1a1a1a;font-weight:normal;font-style:normal;">Receipt</div>
<div class="t" style="left:577.5px;top:746.88px;font-size:13.5px;line-height:16.88px;color:#1a1a1a;font-weight:normal;font-style:normal;letter-spacing:0.4px">001</div>
<div class="t" style="left:761.5px;top:746.88px;font-size:13.5px;line-height:16.88px;color:#1a1a1a;font-weight:normal;font-style:normal;">Cash</div>
<div class="t" style="left:1105.5px;top:746.88px;font-size:13.5px;line-height:16.88px;color:#1a1a1a;font-weight:normal;font-style:normal;letter-spacing:0.4px">11/23/22</div>
<div class="t" style="right:589.5999999999999px;top:746.88px;font-size:13.5px;line-height:16.88px;color:#1a1a1a;font-weight:normal;font-style:normal;letter-spacing:0.4px">1,325.06</div>
<div class="t" style="left:1329.5px;top:746.88px;font-size:13.5px;line-height:16.88px;color:#1a1a1a;font-weight:normal;font-style:normal;">$</div>
<div class="t" style="left:1697.5px;top:746.88px;font-size:13.5px;line-height:16.88px;color:#1a1a1a;font-weight:normal;font-style:normal;letter-spacing:0.4px">RC229000041</div>
<div style="position:absolute;left:12px;top:768px;width:1884px;height:27px;background:#f5f6f6"></div>
<div class="t" style="left:18.5px;top:773.88px;font-size:13.5px;line-height:16.88px;color:#1a1a1a;font-weight:normal;font-style:normal;letter-spacing:0.4px">11/11/22</div>
<div class="t" style="left:90.5px;top:773.88px;font-size:13.5px;line-height:16.88px;color:#1a1a1a;font-weight:normal;font-style:normal;letter-spacing:0.4px">RC229000039</div>
<div class="t" style="left:241.5px;top:773.88px;font-size:13.5px;line-height:16.88px;color:#1a1a1a;font-weight:normal;font-style:normal;">Receipt</div>
<div class="t" style="left:577.5px;top:773.88px;font-size:13.5px;line-height:16.88px;color:#1a1a1a;font-weight:normal;font-style:normal;letter-spacing:0.4px">001</div>
<div class="t" style="left:761.5px;top:773.88px;font-size:13.5px;line-height:16.88px;color:#1a1a1a;font-weight:normal;font-style:normal;">Check</div>
<div class="t" style="left:1105.5px;top:773.88px;font-size:13.5px;line-height:16.88px;color:#1a1a1a;font-weight:normal;font-style:normal;letter-spacing:0.4px">11/11/22</div>
<div class="t" style="right:589.5999999999999px;top:773.88px;font-size:13.5px;line-height:16.88px;color:#1a1a1a;font-weight:normal;font-style:normal;letter-spacing:0.4px">2,500.00</div>
<div class="t" style="left:1329.5px;top:773.88px;font-size:13.5px;line-height:16.88px;color:#1a1a1a;font-weight:normal;font-style:normal;">$</div>
<div class="t" style="left:1697.5px;top:773.88px;font-size:13.5px;line-height:16.88px;color:#1a1a1a;font-weight:normal;font-style:normal;letter-spacing:0.4px">RC229000039</div>
<div style="position:absolute;left:12px;top:795px;width:1884px;height:27px;background:#ffffff"></div>
<div class="t" style="left:18.5px;top:800.88px;font-size:13.5px;line-height:16.88px;color:#1a1a1a;font-weight:normal;font-style:normal;letter-spacing:0.4px">11/09/22</div>
<div class="t" style="left:90.5px;top:800.88px;font-size:13.5px;line-height:16.88px;color:#1a1a1a;font-weight:normal;font-style:normal;letter-spacing:0.4px">CH22000005</div>
<div class="t" style="left:241.5px;top:800.88px;font-size:13.5px;line-height:16.88px;color:#1a1a1a;font-weight:normal;font-style:normal;">Check Payment</div>
<div class="t" style="left:393.5px;top:800.88px;font-size:13.5px;line-height:16.88px;color:#1a1a1a;font-weight:normal;font-style:normal;letter-spacing:0.4px">10</div>
<div class="t" style="left:761.5px;top:800.88px;font-size:13.5px;line-height:16.88px;color:#1a1a1a;font-weight:normal;font-style:normal;">Check</div>
<div class="t" style="left:1105.5px;top:800.88px;font-size:13.5px;line-height:16.88px;color:#1a1a1a;font-weight:normal;font-style:normal;letter-spacing:0.4px">11/09/22</div>
<div class="t" style="right:589.5999999999999px;top:800.88px;font-size:13.5px;line-height:16.88px;color:#1a1a1a;font-weight:normal;font-style:normal;letter-spacing:0.4px">25.20</div>
<div class="t" style="left:1329.5px;top:800.88px;font-size:13.5px;line-height:16.88px;color:#1a1a1a;font-weight:normal;font-style:normal;">$</div>
<div style="position:absolute;left:12px;top:822px;width:1884px;height:27px;background:#f5f6f6"></div>
<div class="t" style="left:18.5px;top:827.88px;font-size:13.5px;line-height:16.88px;color:#1a1a1a;font-weight:normal;font-style:normal;letter-spacing:0.4px">11/09/22</div>
<div class="t" style="left:90.5px;top:827.88px;font-size:13.5px;line-height:16.88px;color:#1a1a1a;font-weight:normal;font-style:normal;letter-spacing:0.4px">RC229000038</div>
<div class="t" style="left:241.5px;top:827.88px;font-size:13.5px;line-height:16.88px;color:#1a1a1a;font-weight:normal;font-style:normal;">Receipt</div>
<div class="t" style="left:577.5px;top:827.88px;font-size:13.5px;line-height:16.88px;color:#1a1a1a;font-weight:normal;font-style:normal;letter-spacing:0.4px">101</div>
<div class="t" style="left:761.5px;top:827.88px;font-size:13.5px;line-height:16.88px;color:#1a1a1a;font-weight:normal;font-style:normal;">Visa C.A.L.</div>
<div class="t" style="left:1105.5px;top:827.88px;font-size:13.5px;line-height:16.88px;color:#1a1a1a;font-weight:normal;font-style:normal;letter-spacing:0.4px">12/02/22</div>
<div class="t" style="right:589.5999999999999px;top:827.88px;font-size:13.5px;line-height:16.88px;color:#1a1a1a;font-weight:normal;font-style:normal;letter-spacing:0.4px">5.00</div>
<div class="t" style="left:1329.5px;top:827.88px;font-size:13.5px;line-height:16.88px;color:#1a1a1a;font-weight:normal;font-style:normal;">$</div>
<div class="t" style="left:1697.5px;top:827.88px;font-size:13.5px;line-height:16.88px;color:#1a1a1a;font-weight:normal;font-style:normal;letter-spacing:0.4px">RC229000038</div>
<div style="position:absolute;left:12px;top:849px;width:1884px;height:27px;background:#e3edfb"></div>
<div class="t" style="left:18.5px;top:854.88px;font-size:13.5px;line-height:16.88px;color:#1a1a1a;font-weight:normal;font-style:normal;letter-spacing:0.4px">11/09/22</div>
<div class="t" style="left:241.5px;top:854.88px;font-size:13.5px;line-height:16.88px;color:#1a1a1a;font-weight:normal;font-style:normal;">Receipt</div>
<div class="t" style="left:577.5px;top:854.88px;font-size:13.5px;line-height:16.88px;color:#1a1a1a;font-weight:normal;font-style:normal;letter-spacing:0.4px">001</div>
<div class="t" style="left:761.5px;top:854.88px;font-size:13.5px;line-height:16.88px;color:#1a1a1a;font-weight:normal;font-style:normal;">Cash</div>
<div class="t" style="left:1105.5px;top:854.88px;font-size:13.5px;line-height:16.88px;color:#1a1a1a;font-weight:normal;font-style:normal;letter-spacing:0.4px">11/09/22</div>
<div class="t" style="right:589.5999999999999px;top:854.88px;font-size:13.5px;line-height:16.88px;color:#1a1a1a;font-weight:normal;font-style:normal;letter-spacing:0.4px">550.00</div>
<div class="t" style="left:1329.5px;top:854.88px;font-size:13.5px;line-height:16.88px;color:#1a1a1a;font-weight:normal;font-style:normal;">$</div>
<div class="t" style="left:1697.5px;top:854.88px;font-size:13.5px;line-height:16.88px;color:#1a1a1a;font-weight:normal;font-style:normal;letter-spacing:0.4px">RC229000044</div>
<div style="position:absolute;left:235px;top:174px;width:1px;height:702px;background:#e3e5e8"></div>
<div style="position:absolute;left:387px;top:174px;width:1px;height:702px;background:#e3e5e8"></div>
<div style="position:absolute;left:571px;top:174px;width:1px;height:702px;background:#e3e5e8"></div>
<div style="position:absolute;left:755px;top:174px;width:1px;height:702px;background:#e3e5e8"></div>
<div style="position:absolute;left:1099px;top:174px;width:1px;height:702px;background:#e3e5e8"></div>
<div style="position:absolute;left:1171px;top:174px;width:1px;height:702px;background:#e3e5e8"></div>
<div style="position:absolute;left:1323px;top:174px;width:1px;height:702px;background:#e3e5e8"></div>
<div style="position:absolute;left:1395px;top:174px;width:1px;height:702px;background:#e3e5e8"></div>
<div style="position:absolute;left:1691px;top:174px;width:1px;height:702px;background:#e3e5e8"></div>
<div style="position:absolute;left:1843px;top:174px;width:1px;height:702px;background:#e3e5e8"></div>
<div style="position:absolute;left:82px;top:174px;width:7px;height:702px;background:linear-gradient(90deg,rgba(0,0,0,0),rgba(0,0,0,0.055) 30%,rgba(0,0,0,0.03) 55%,rgba(0,0,0,0))"></div>
<div style="position:absolute;left:84px;top:850px;width:150px;height:25px;border:1px solid #4a40c0;box-sizing:border-box;background:#e5e6e8"></div>
<div style="position:absolute;left:91px;top:855px;width:86px;height:15px;background:#2f5fd6"></div>
<div class="t" style="left:91.5px;top:855.48px;font-size:13.2px;line-height:16.5px;color:#ffffff;font-weight:normal;font-style:normal;">RC229000044</div>
<div style="position:absolute;left:235px;top:850px;width:25px;height:25px;border:1px solid #4a40c0;box-sizing:border-box;background:#fff"></div>
<svg style="position:absolute;left:239px;top:855px" width="16" height="16" viewBox="0 0 16 16">
<circle cx="6.8" cy="6.8" r="5" fill="none" stroke="#6a6f76" stroke-width="1.6"/>
<path d="M10.5,10.5 L14,14" stroke="#6a6f76" stroke-width="1.8" stroke-linecap="round"/></svg>
<div style="position:absolute;left:2px;top:178px;width:3px;height:688px;background:#9aa6ad"></div>
<div style="position:absolute;left:0px;top:258px;width:7px;height:44px;border-radius:3px;background:#5d6a72"></div>
<svg style="position:absolute;left:0;top:173px" width="8" height="5" viewBox="0 0 8 5"><path d="M0.5,4.5 L4,0.5 L7.5,4.5 Z" fill="#222"/></svg>
<svg style="position:absolute;left:0;top:871px" width="8" height="5" viewBox="0 0 8 5"><path d="M0.5,0.5 L4,4.5 L7.5,0.5 Z" fill="#222"/></svg>
<div style="position:absolute;left:93px;top:877.5px;width:1794px;height:3px;background:#9aa6ad"></div>
<div style="position:absolute;left:93px;top:876px;width:640px;height:6.5px;border-radius:3.5px;background:#5d6a72"></div>
<svg style="position:absolute;left:84px;top:876px" width="5" height="7" viewBox="0 0 5 7"><path d="M4.5,0.5 L0.5,3.5 L4.5,6.5 Z" fill="#222"/></svg>
<svg style="position:absolute;left:1891px;top:876px" width="5" height="7" viewBox="0 0 5 7"><path d="M0.5,0.5 L4.5,3.5 L0.5,6.5 Z" fill="#222"/></svg>
<div style="position:absolute;left:1903px;top:174px;width:5px;height:739px;background:#f3f4f5"></div>
<div style="position:absolute;left:10px;top:891.5px;width:899px;height:1.5px;background:#5146a8"></div>
<div style="position:absolute;left:995px;top:891.5px;width:899px;height:1.5px;background:#5146a8"></div>
<div style="position:absolute;left:921px;top:885px;width:62px;height:14.5px;border-radius:2px;background:#3d34d6"></div>
<div style="position:absolute;left:942px;top:888.5px;width:20px;height:1px;background:#fff"></div>
<div style="position:absolute;left:942px;top:891.5px;width:20px;height:1px;background:#fff"></div>
<div style="position:absolute;left:942px;top:894.5px;width:20px;height:1px;background:#fff"></div>
<div class="t" style="left:863px;top:166.36px;font-size:12.5px;line-height:15.62px;color:rgba(20,20,40,0.045);font-weight:normal;font-style:normal;">Snipping Tool</div>
<div class="t" style="left:866px;top:197.37px;font-size:13px;line-height:16.25px;color:rgba(20,20,40,0.045);font-weight:normal;font-style:normal;">New</div>
<div style="position:absolute;left:902px;top:199px;width:21px;height:14px;background:rgba(60,120,220,0.05)"></div>
<div class="t" style="left:928px;top:197.37px;font-size:13px;line-height:16.25px;color:rgba(20,20,40,0.045);font-weight:normal;font-style:normal;">Mode</div>
<div class="t" style="left:1011px;top:197.37px;font-size:13px;line-height:16.25px;color:rgba(20,20,40,0.045);font-weight:normal;font-style:normal;">Delay</div>
<div class="t" style="left:1164px;top:197.37px;font-size:13px;line-height:16.25px;color:rgba(20,20,40,0.045);font-weight:normal;font-style:normal;">Options</div>
<div class="t" style="left:845px;top:232.18px;font-size:13.2px;line-height:16.5px;color:rgba(20,20,40,0.045);font-weight:normal;font-style:normal;">Select the snip mode using the Mode button or click the New</div>
<div class="t" style="left:843px;top:244.37px;font-size:13px;line-height:16.25px;color:rgba(20,20,40,0.045);font-weight:normal;font-style:normal;">button.</div>
</body></html>
